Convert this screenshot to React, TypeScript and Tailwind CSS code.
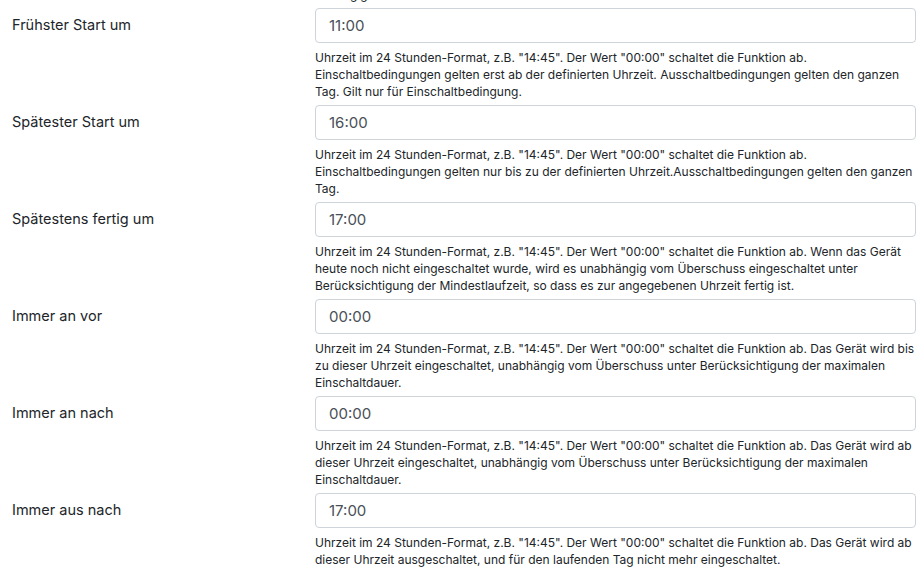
const rows = [
  {
    label: 'Frühster Start um',
    value: '11:00',
    help: 'Uhrzeit im 24 Stunden-Format, z.B. "14:45". Der Wert "00:00" schaltet die Funktion ab. Einschaltbedingungen gelten erst ab der definierten Uhrzeit. Ausschaltbedingungen gelten den ganzen Tag. Gilt nur für Einschaltbedingung.',
  },
  {
    label: 'Spätester Start um',
    value: '16:00',
    help: 'Uhrzeit im 24 Stunden-Format, z.B. "14:45". Der Wert "00:00" schaltet die Funktion ab. Einschaltbedingungen gelten nur bis zu der definierten Uhrzeit.Ausschaltbedingungen gelten den ganzen Tag.',
  },
  {
    label: 'Spätestens fertig um',
    value: '17:00',
    help: 'Uhrzeit im 24 Stunden-Format, z.B. "14:45". Der Wert "00:00" schaltet die Funktion ab. Wenn das Gerät heute noch nicht eingeschaltet wurde, wird es unabhängig vom Überschuss eingeschaltet unter Berücksichtigung der Mindestlaufzeit, so dass es zur angegebenen Uhrzeit fertig ist.',
  },
  {
    label: 'Immer an vor',
    value: '00:00',
    help: 'Uhrzeit im 24 Stunden-Format, z.B. "14:45". Der Wert "00:00" schaltet die Funktion ab. Das Gerät wird bis zu dieser Uhrzeit eingeschaltet, unabhängig vom Überschuss unter Berücksichtigung der maximalen Einschaltdauer.',
  },
  {
    label: 'Immer an nach',
    value: '00:00',
    help: 'Uhrzeit im 24 Stunden-Format, z.B. "14:45". Der Wert "00:00" schaltet die Funktion ab. Das Gerät wird ab dieser Uhrzeit eingeschaltet, unabhängig vom Überschuss unter Berücksichtigung der maximalen Einschaltdauer.',
  },
  {
    label: 'Immer aus nach',
    value: '17:00',
    help: 'Uhrzeit im 24 Stunden-Format, z.B. "14:45". Der Wert "00:00" schaltet die Funktion ab. Das Gerät wird ab dieser Uhrzeit ausgeschaltet, und für den laufenden Tag nicht mehr eingeschaltet.',
  },
];

export default function App() {
  return (
    <div className="h-[572px] w-[924px] overflow-hidden bg-white font-['Inter','Liberation_Sans',sans-serif] text-[#212529]">
      <div className="-mt-[14px]">
        {/* tail of the row above, scrolled out of view */}
        <div className="flex">
          <div className="w-[315px]" />
          <p className="mb-[5px] w-[601px] text-[12px] leading-[17px]">abhängig.</p>
        </div>

        {rows.map((row, i) => (
          <div key={i} className="mb-[5px] flex">
            <label className="w-[315px] pl-3 pt-[6px] text-[14.5px] leading-[21px]">{row.label}</label>
            <div className="w-[601px]">
              <input
                type="text"
                defaultValue={row.value}
                className="block h-[35px] w-full rounded-[4px] border border-[#ced4da] bg-white px-[13px] text-[15px] text-[#495057] outline-none"
              />
              <p className="mt-[6px] text-[12px] leading-[17px]">{row.help}</p>
            </div>
          </div>
        ))}
      </div>
    </div>
  );
}
